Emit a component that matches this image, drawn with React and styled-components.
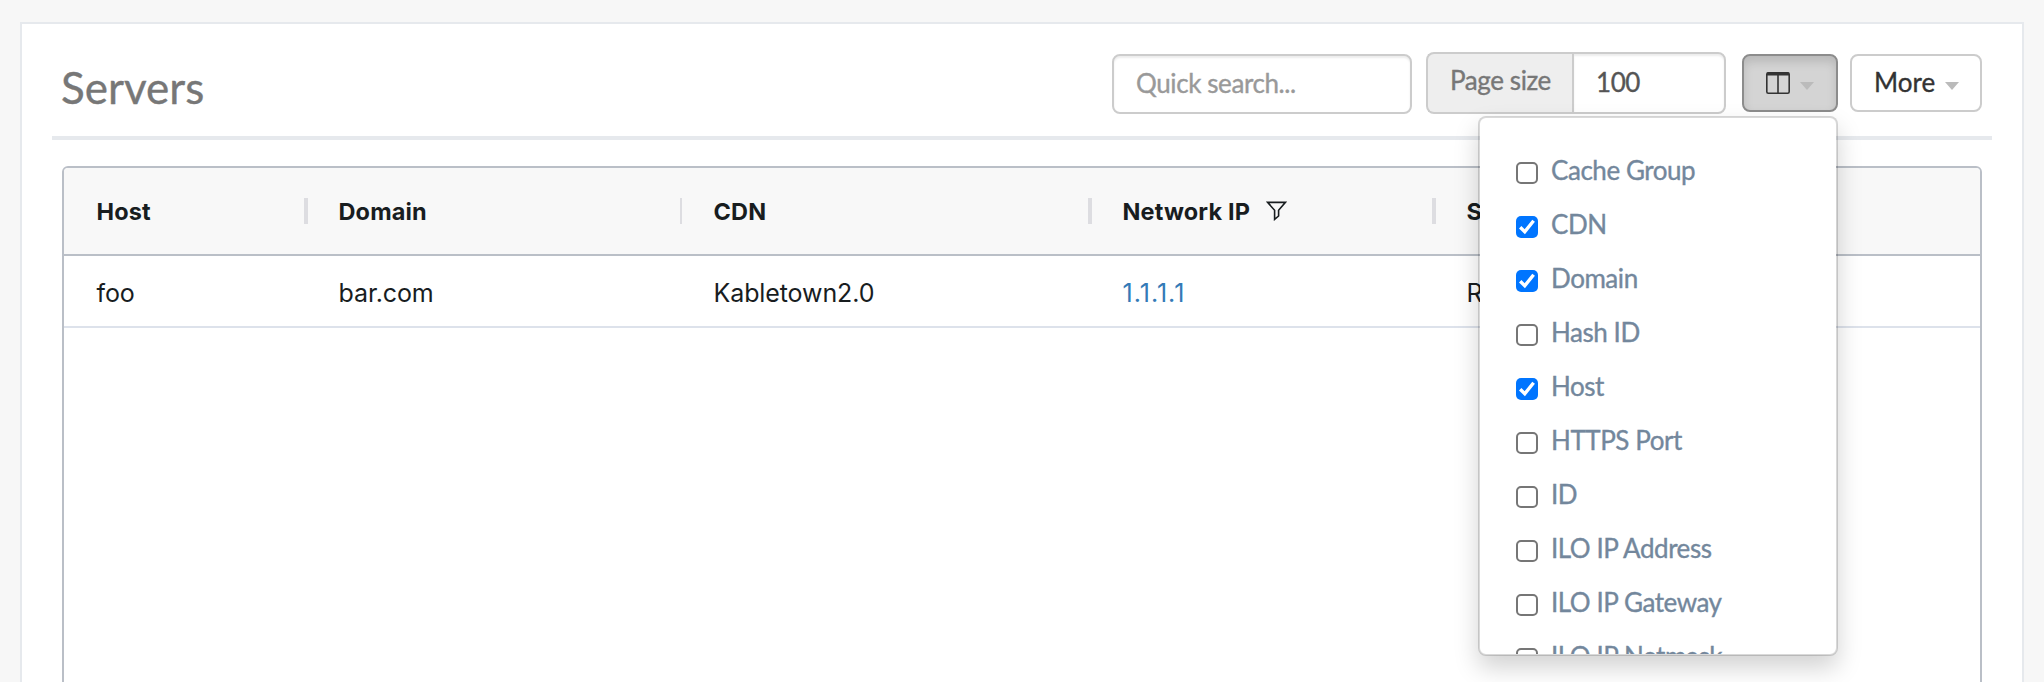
import React from 'react';
import styled, { createGlobalStyle, css } from 'styled-components';

const Global = createGlobalStyle`
  *, *::before, *::after { box-sizing: border-box; }
  html, body { height: 100%; overflow: hidden; }
  body {
    margin: 0;
    background: #f7f7f7;
    font-family: Lato, "Liberation Sans", sans-serif;
    font-size: 26px;
    color: #73879c;
  }
`;

const Page = styled.main`
  height: 682px;
  padding: 22px 20px 0;
  overflow: hidden;
`;

const Panel = styled.section`
  height: 700px;
  padding: 28px 30px 0;
  background: #fff;
  border: 2px solid #e6e9ed;
`;

const TitleBar = styled.header`
  display: flex;
  justify-content: space-between;
  align-items: flex-start;
  height: 88px;
  padding: 0 10px;
  border-bottom: 4px solid #e6e9ed;
`;

const weight = css`
  -webkit-text-stroke: 0.35px currentColor;
`;

const Title = styled.h2`
  ${weight}
  margin: 8px 0 0 -1px;
  font-size: 44px;
  line-height: 54px;
  font-weight: 400;
  color: #777;
`;

const Toolbar = styled.div`
  display: flex;
  align-items: flex-start;
`;

const field = css`
  ${weight}
  border: 2px solid #ccc;
  background: #fff;
  color: #555;
  font: 400 26px/36px Lato, sans-serif;
  letter-spacing: -0.4px;
  box-shadow: inset 0 2px 2px rgba(0, 0, 0, 0.075);
  outline: none;
  padding: 0 22px 3px;
`;

const SearchInput = styled.input`
  ${field}
  width: 300px;
  height: 60px;
  margin: 2px 14px 0 0;
  border-radius: 8px;
  &::placeholder { color: #999; opacity: 1; }
`;

const InputGroup = styled.div`
  display: flex;
  width: 300px;
  height: 62px;
  margin-right: 16px;
`;

const Addon = styled.label`
  ${weight}
  width: 146px;
  padding: 8px 0 0 22px;
  line-height: 36px;
  letter-spacing: -0.4px;
  color: #777;
  background: #eee;
  border: 2px solid #ccc;
  border-right: 0;
  border-radius: 8px 0 0 8px;
`;

const PageSize = styled.input`
  ${field}
  width: 154px;
  border-radius: 0 8px 8px 0;
`;

const Dropdown = styled.div`
  position: relative;
  margin: 2px 0 0;
  & + & { margin-left: 12px; }
`;

const Button = styled.button`
  display: flex;
  align-items: center;
  width: ${(p) => p.$width}px;
  height: 58px;
  padding: 0 0 0 22px;
  font: 400 26px/36px Lato, sans-serif;
  color: #333;
  background: ${(p) => (p.$open ? '#d4d4d4' : '#fff')};
  border: 2px solid ${(p) => (p.$open ? '#8c8c8c' : '#ccc')};
  border-radius: 8px;
  box-shadow: ${(p) => (p.$open ? 'inset 0 6px 10px rgba(0, 0, 0, 0.125)' : 'none')};
`;

const ButtonLabel = styled.span`
  ${weight}
  margin-bottom: 2px;
`;

const Caret = styled.span`
  margin: 5px 0 0 10px;
  border-top: 8px solid #bbb;
  border-left: 7px solid transparent;
  border-right: 7px solid transparent;
`;

const Menu = styled.ul`
  position: absolute;
  z-index: 10;
  top: 62px;
  right: 0;
  width: 360px;
  height: 540px;
  margin: 0;
  padding: 28px 36px 0;
  overflow: hidden;
  list-style: none;
  background: #fff;
  background-clip: padding-box;
  border: 2px solid rgba(0, 0, 0, 0.15);
  border-radius: 8px;
  box-shadow: 0 12px 24px rgba(0, 0, 0, 0.175);
`;

const MenuItem = styled.li`
  height: 54px;
`;

const Option = styled.label`
  ${weight}
  display: flex;
  align-items: flex-start;
  gap: 13px;
  line-height: 36px;
  letter-spacing: -0.45px;
  padding-top: 6px;
  white-space: nowrap;
`;

const Checkbox = styled.span`
  display: flex;
  flex: none;
  width: 22px;
  height: 22px;
  margin-top: 10px;
  border-radius: 5px;
  border: ${(p) => (p.$checked ? '0' : '2px solid #767676')};
  background: ${(p) => (p.$checked ? '#0075ff' : '#fff')};
`;

const Grid = styled.div`
  height: 600px;
  margin: 26px 10px 0;
  border: 2px solid #babfc7;
  border-radius: 6px;
  overflow: hidden;
  font-family: Inter, sans-serif;
  color: #181d1f;
`;

const columns = '242px 375px 409px 344px 1fr';

const HeaderRow = styled.div`
  display: grid;
  grid-template-columns: ${columns};
  height: 88px;
  background: #f8f8f8;
  border-bottom: 2px solid #babfc7;
`;

const HeaderCell = styled.div`
  display: flex;
  align-items: center;
  padding: 0 0 0 32.5px;
  font-size: 23.5px;
  font-weight: 700;
  letter-spacing: 0.15px;
  svg { margin: 0 0 0 16px; }
`;

const Separator = styled.span`
  width: ${(p) => p.$width}px;
  height: 26px;
  margin: 0 ${(p) => (p.$width === 2 ? -1 : -2)}px 0 auto;
  background: #dddde1;
`;

const Row = styled.div`
  display: grid;
  grid-template-columns: ${columns};
  height: 72px;
  border-bottom: 2px solid #dde2eb;
`;

const Cell = styled.div`
  padding: 17px 0 0 32.5px;
  font-size: 25px;
  line-height: 40px;
  letter-spacing: -0.1px;
`;

const Link = styled.a`
  color: #337ab7;
  letter-spacing: 1px;
`;

const ColumnsIcon = () => (
  <svg width="24" height="22" viewBox="0 0 24 22" fill="none" stroke="#333">
    <rect x="0.8" y="0.8" width="22.4" height="20.4" rx="1.5" strokeWidth="1.6" />
    <path d="M1 2h22" strokeWidth="3" />
    <path d="M12 3v18" strokeWidth="1.6" />
  </svg>
);

const FilterIcon = () => (
  <svg width="21" height="20" viewBox="0 0 21 20" fill="none" stroke="#181d1f" strokeWidth="1.6">
    <path d="M1.600 1.400h17.800L12.600 9.200v5.800l-4 3.400V9.200z" />
  </svg>
);

const CheckMark = () => (
  <svg width="22" height="22" viewBox="0 0 22 22" fill="none" stroke="#fff" strokeWidth="3.4">
    <path d="M4.200 11.300L8.800 15.800L17.600 4.800" />
  </svg>
);

const headers = [
  { label: 'Host', sep: 4 },
  { label: 'Domain', sep: 2 },
  { label: 'CDN', sep: 4 },
  { label: 'Network IP', sep: 4, filtered: true },
  { label: 'Status' },
];

const options = [
  ['Cache Group', false],
  ['CDN', true],
  ['Domain', true],
  ['Hash ID', false],
  ['Host', true],
  ['HTTPS Port', false],
  ['ID', false],
  ['ILO IP Address', false],
  ['ILO IP Gateway', false],
  ['ILO IP Netmask', false],
];

export default function App() {
  return (
    <Page>
      <Global />
      <Panel>
        <TitleBar>
          <Title>Servers</Title>
          <Toolbar>
            <SearchInput placeholder="Quick search..." />
            <InputGroup>
              <Addon htmlFor="page-size">Page size</Addon>
              <PageSize id="page-size" defaultValue="100" />
            </InputGroup>
            <Dropdown>
              <Button $width={96} $open aria-label="Select columns">
                <ColumnsIcon />
                <Caret />
              </Button>
              <Menu>
                {options.map(([label, checked]) => (
                  <MenuItem key={label}>
                    <Option>
                      <Checkbox $checked={checked}>{checked && <CheckMark />}</Checkbox>
                      {label}
                    </Option>
                  </MenuItem>
                ))}
              </Menu>
            </Dropdown>
            <Dropdown>
              <Button $width={132}>
                <ButtonLabel>More</ButtonLabel>
                <Caret />
              </Button>
            </Dropdown>
          </Toolbar>
        </TitleBar>
        <Grid>
          <HeaderRow>
            {headers.map((h) => (
              <HeaderCell key={h.label}>
                {h.label}
                {h.filtered && <FilterIcon />}
                {h.sep && <Separator $width={h.sep} />}
              </HeaderCell>
            ))}
          </HeaderRow>
          <Row>
            <Cell>foo</Cell>
            <Cell>bar.com</Cell>
            <Cell>Kabletown2.0</Cell>
            <Cell><Link>1.1.1.1</Link></Cell>
            <Cell>R</Cell>
          </Row>
        </Grid>
      </Panel>
    </Page>
  );
}
